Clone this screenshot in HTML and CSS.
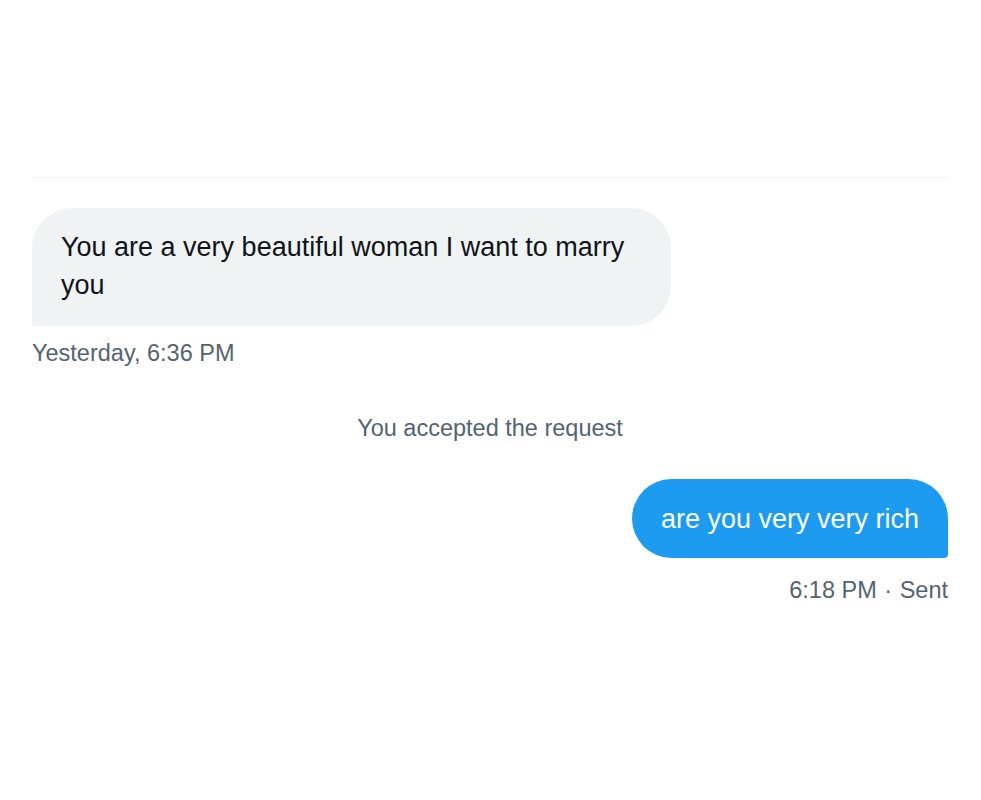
FILE: index.html
```html
<!DOCTYPE html>
<html lang="en">
<head>
    <meta charset="UTF-8">
    <meta name="viewport" content="width=device-width, initial-scale=1.0">
    <title>Messages</title>
    <link rel="stylesheet" href="styles.css">
</head>
<body>
    <div class="conversation">
        <div class="divider"></div>

        <div class="message received">
            <div class="bubble">You are a very beautiful woman I want to marry you</div>
            <div class="meta">Yesterday, 6:36 PM</div>
        </div>

        <div class="notice">You accepted the request</div>

        <div class="message sent">
            <div class="bubble">are you very very rich</div>
            <div class="meta">6:18 PM <span class="dot">·</span> Sent</div>
        </div>
    </div>
</body>
</html>
```

FILE: styles.css
```css
body {
    margin: 0;
    padding: 0;
    background-color: #fff;
    font-family: "Liberation Sans", Arial, sans-serif;
    color: #0f1419;
}
.conversation {
    padding: 177px 33px 0 32px;
}
.divider {
    height: 1px;
    background-color: #eff3f4;
    margin-bottom: 30px;
}
.message {
    display: flex;
    flex-direction: column;
}
.message.received {
    align-items: flex-start;
}
.message.sent {
    align-items: flex-end;
}
.bubble {
    max-width: 581px;
    padding: 20px 29px 22px 29px;
    font-size: 27px;
    line-height: 38px;
}
.received .bubble {
    background-color: #eff3f4;
    border-radius: 40px 40px 40px 4px;
}
.sent .bubble {
    background-color: #1d9bf0;
    color: #fff;
    border-radius: 40px 40px 4px 40px;
    padding: 21px 29px 20px 29px;
}
.meta {
    margin-top: 13px;
    font-size: 23.5px;
    line-height: 28px;
    color: #536471;
}
.sent .meta {
    margin-top: 18px;
}
.dot {
    margin: 0 1px;
}
.notice {
    margin: 47px 0 37px;
    text-align: center;
    font-size: 23.5px;
    line-height: 28px;
    color: #536471;
}
```
